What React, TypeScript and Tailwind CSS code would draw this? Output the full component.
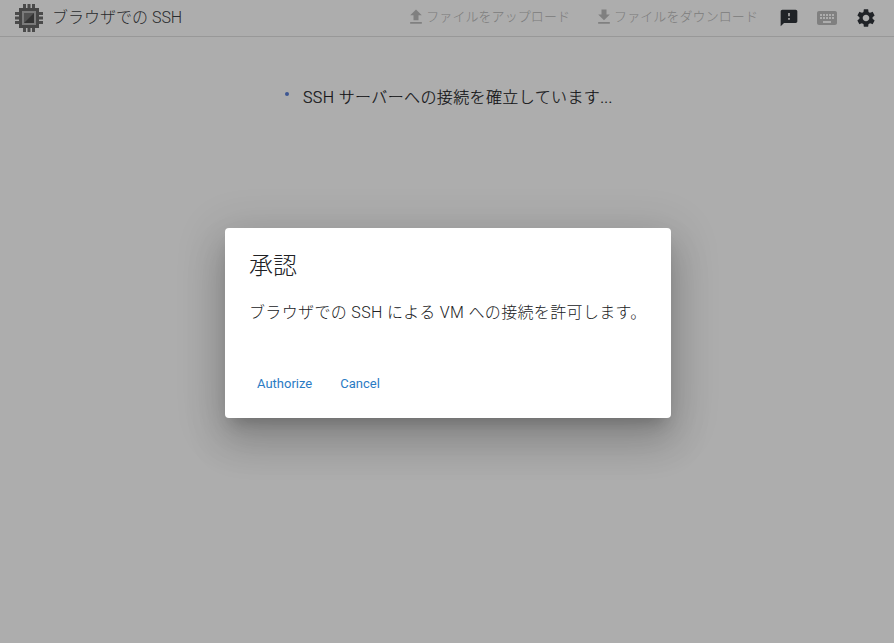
import React from "react";

const FONT = "font-['Roboto','Noto_Sans_CJK_JP',sans-serif]";

function Icon({ d, className }: { d: string; className: string }) {
  return (
    <svg viewBox="0 0 24 24" className={className} fill="currentColor" aria-hidden="true">
      <path d={d} />
    </svg>
  );
}

function Chip() {
  return (
    <svg viewBox="0 0 28 28" className="w-7 h-7 shrink-0" aria-hidden="true">
      <g fill="#6f6f6f">
        <rect x="8" y="0" width="3" height="4" />
        <rect x="12.5" y="0" width="3" height="4" />
        <rect x="17" y="0" width="3" height="4" />
        <rect x="8" y="24" width="3" height="4" />
        <rect x="12.5" y="24" width="3" height="4" />
        <rect x="17" y="24" width="3" height="4" />
        <rect x="0" y="8" width="4" height="3" />
        <rect x="0" y="12.5" width="4" height="3" />
        <rect x="0" y="17" width="4" height="3" />
        <rect x="24" y="8" width="4" height="3" />
        <rect x="24" y="12.5" width="4" height="3" />
        <rect x="24" y="17" width="4" height="3" />
      </g>
      <rect x="4" y="4" width="20" height="20" fill="#676767" />
      <rect x="7" y="7" width="14" height="14" fill="#b4b4b4" />
      <rect x="9" y="9" width="10" height="10" fill="#7a7a7a" />
      <path d="M19 9v10H9z" fill="#4c4c4c" />
    </svg>
  );
}

function ToolButton({ d, label }: { d: string; label: string }) {
  return (
    <div className="flex items-center -mt-[2px] text-[13px] tracking-[0.08px] text-[#b8b8b8] font-light">
      <Icon d={d} className="w-5 h-5 text-[#bdbdbd]" />
      <span>{label}</span>
    </div>
  );
}

export default function App() {
  return (
    <div className={`relative w-full h-[643px] overflow-hidden bg-white ${FONT}`}>
      <header className="flex items-center h-[37px] border-b border-[#e0e0e0]">
        <div className="ml-[15px] flex items-center">
          <Chip />
          <span className="ml-[9px] text-base font-light text-[#3c4043]">ブラウザでの SSH</span>
        </div>
        <div className="ml-auto flex items-center">
          <ToolButton d="M9 16h6v-6h4l-7-7-7 7h4zm-4 2h14v2H5z" label="ファイルをアップロード" />
          <div className="w-[24px]" />
          <ToolButton d="M19 9h-4V3H9v6H5l7 7 7-7zM5 18v2h14v-2H5z" label="ファイルをダウンロード" />
          <div className="w-[21px]" />
          <Icon
            d="M20 2H4c-1.1 0-1.99.9-1.99 2L2 22l4-4h14c1.1 0 2-.9 2-2V4c0-1.1-.9-2-2-2zm-7 12h-2v-2h2v2zm0-4h-2V6h2v4z"
            className="w-5 h-5 text-[#30343a]"
          />
          <div className="w-[16px]" />
          <Icon
            d="M20 5H4c-1.1 0-1.99.9-1.99 2L2 17c0 1.1.9 2 2 2h16c1.1 0 2-.9 2-2V7c0-1.1-.9-2-2-2zm-9 3h2v2h-2V8zm0 3h2v2h-2v-2zM8 8h2v2H8V8zm0 3h2v2H8v-2zm-1 2H5v-2h2v2zm0-3H5V8h2v2zm9 7H8v-2h8v2zm0-4h-2v-2h2v2zm0-3h-2V8h2v2zm3 3h-2v-2h2v2zm0-3h-2V8h2v2z"
            className="w-6 h-6 text-[#bdbdbd]"
          />
          <div className="w-[16px]" />
          <Icon
            d="M19.14 12.94c.04-.3.06-.61.06-.94 0-.32-.02-.64-.07-.94l2.03-1.58c.18-.14.23-.41.12-.61l-1.92-3.32c-.12-.22-.37-.29-.59-.22l-2.39.96c-.5-.38-1.03-.7-1.62-.94l-.36-2.54c-.04-.24-.24-.41-.48-.41h-3.84c-.24 0-.43.17-.47.41l-.36 2.54c-.59.24-1.13.57-1.62.94l-2.39-.96c-.22-.08-.47 0-.59.22L2.74 8.87c-.12.21-.08.47.12.61l2.03 1.58c-.05.3-.09.63-.09.94s.02.64.07.94l-2.03 1.58c-.18.14-.23.41-.12.61l1.92 3.32c.12.22.37.29.59.22l2.39-.96c.5.38 1.03.7 1.62.94l.36 2.54c.05.24.24.41.48.41h3.84c.24 0 .44-.17.47-.41l.36-2.54c.59-.24 1.13-.56 1.62-.94l2.39.96c.22.08.47 0 .59-.22l1.92-3.32c.12-.22.07-.47-.12-.61l-2.01-1.58zM12 15.6c-1.98 0-3.6-1.62-3.6-3.6s1.62-3.6 3.6-3.6 3.6 1.62 3.6 3.6-1.62 3.6-3.6 3.6z"
            className="w-[22px] h-[22px] text-[#30343a]"
          />
          <div className="w-[17px]" />
        </div>
      </header>

      <div className="flex items-center mt-[49px] ml-[285px]">
        <span className="w-[4px] h-[4px] rounded-full bg-[#5a80d8] -mt-[8px]" />
        <span className="ml-[14px] text-base tracking-[0.38px] font-light text-[#202124] [-webkit-text-stroke:0.2px_#202124]">
          SSH サーバーへの接続を確立しています...
        </span>
      </div>

      {/* Modal backdrop */}
      <div className="absolute inset-0 bg-black/[0.32] flex justify-center items-start pt-[228px] pl-[2px]">
        <div className="w-[446px] h-[190px] bg-white rounded-[4px] shadow-[0_11px_15px_-7px_rgba(0,0,0,0.2),0_24px_38px_3px_rgba(0,0,0,0.14),0_9px_46px_8px_rgba(0,0,0,0.12)] flex flex-col">
          <h2 className="mt-[22px] ml-6 text-[24px] leading-[32px] font-light text-[#202124]">承認</h2>
          <p className="mt-[19px] ml-6 text-base tracking-[0.35px] leading-6 font-light text-[#202124]">
            ブラウザでの SSH による VM への接続を許可します。
          </p>
          <div className="mt-auto mb-[24px] ml-8 flex items-center gap-7 text-[13px] leading-[20px] text-[#2b7bc4]">
            <span>Authorize</span>
            <span>Cancel</span>
          </div>
        </div>
      </div>
    </div>
  );
}
